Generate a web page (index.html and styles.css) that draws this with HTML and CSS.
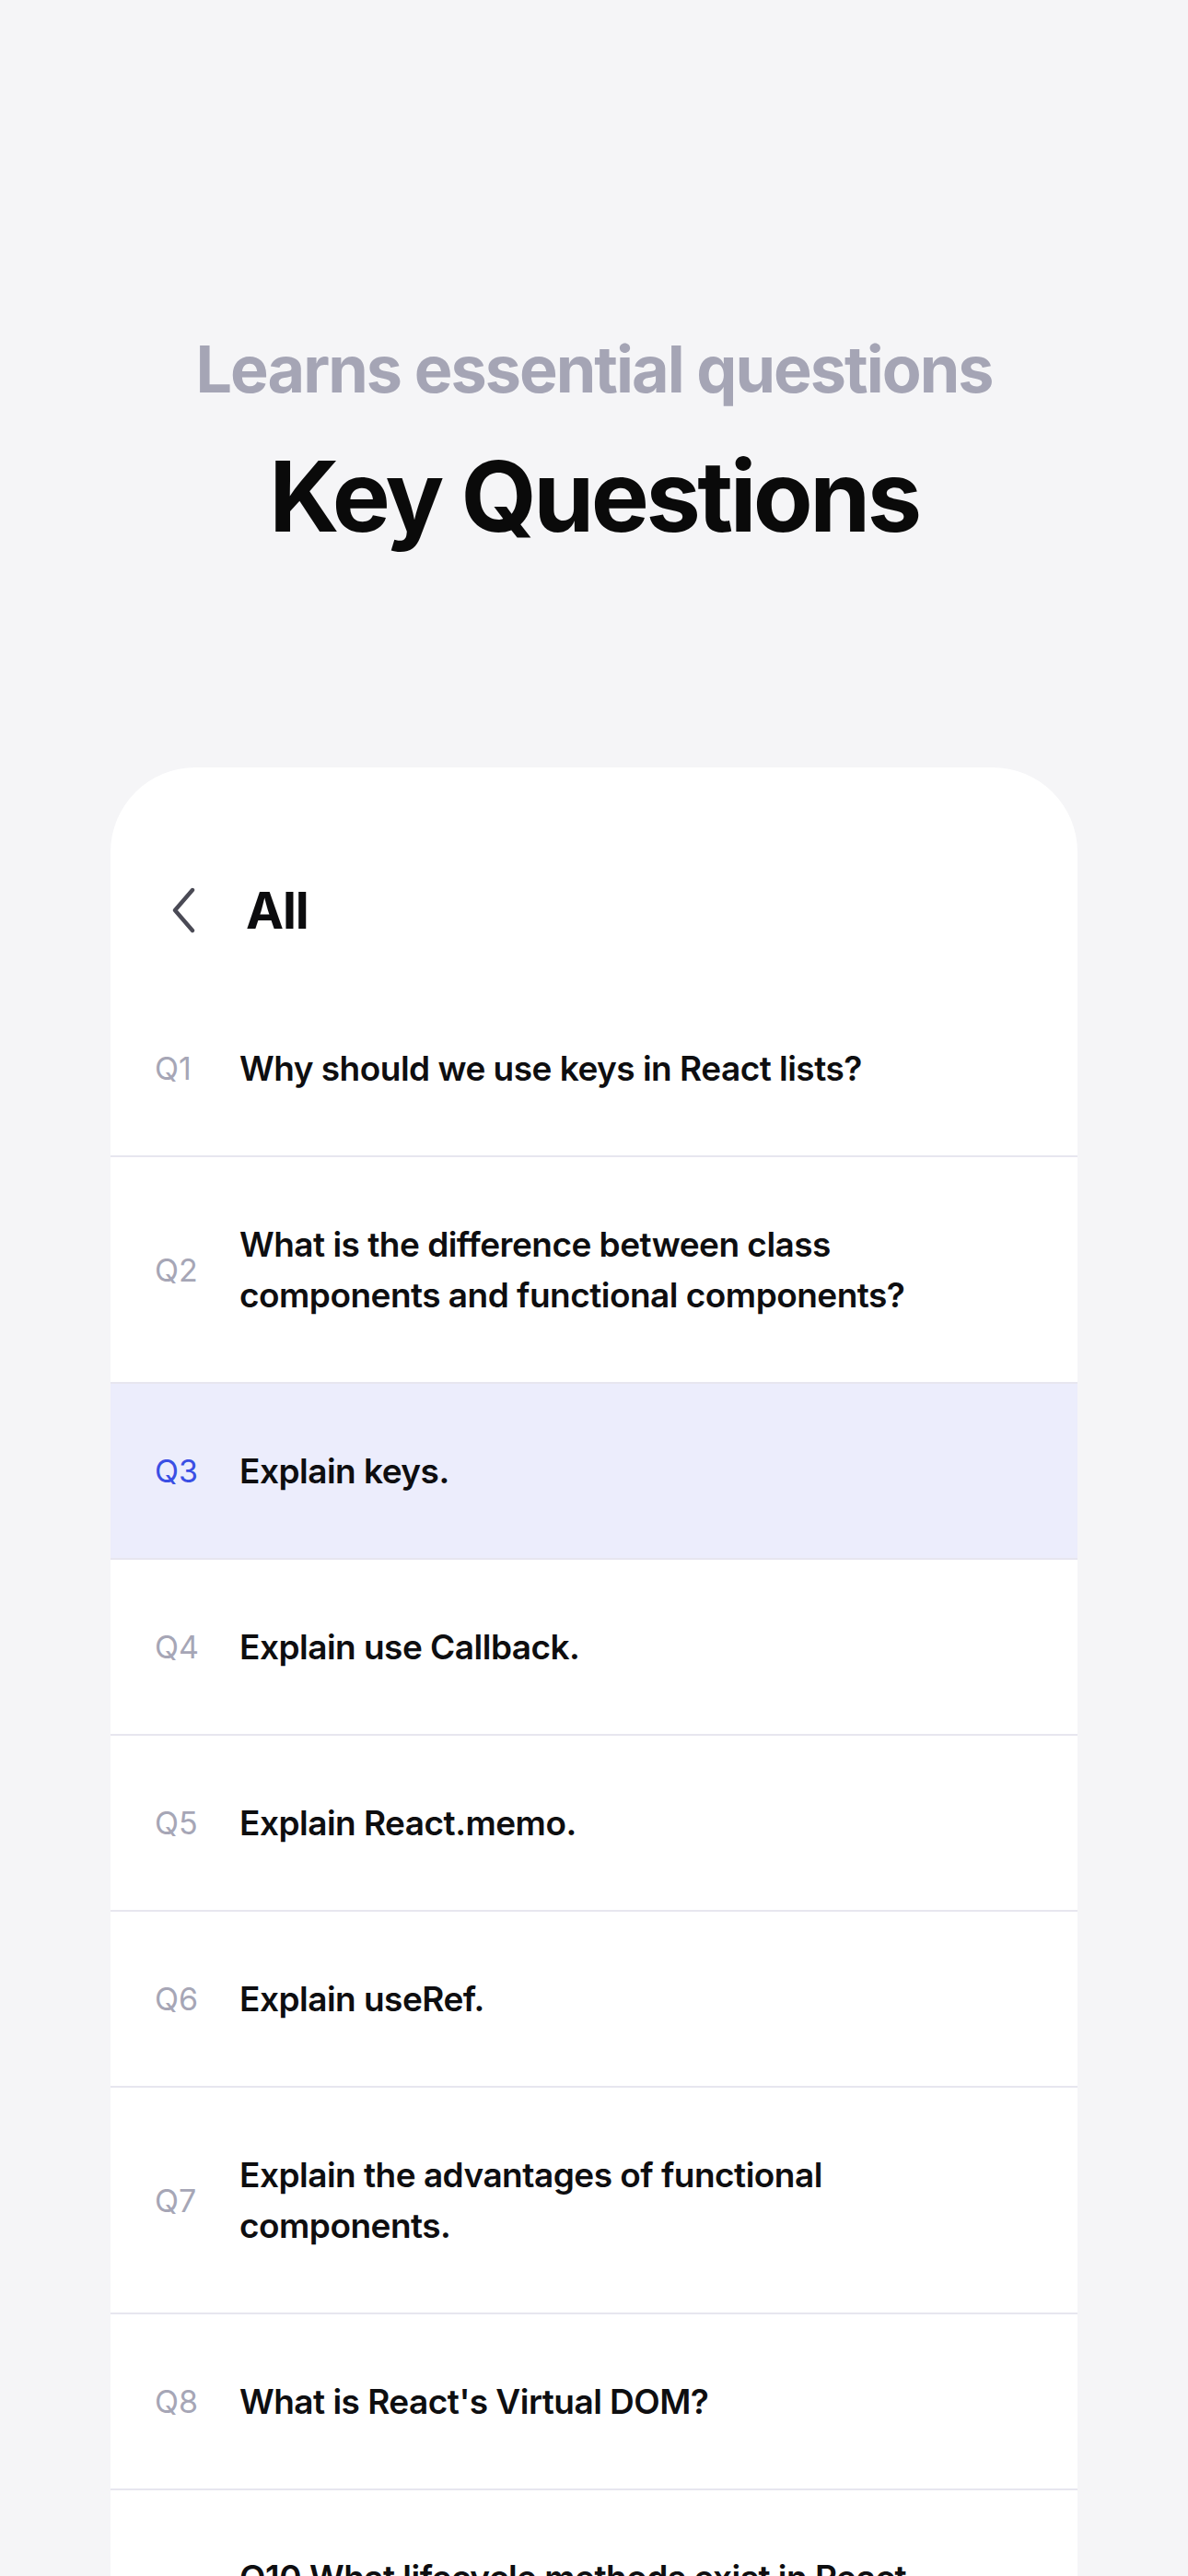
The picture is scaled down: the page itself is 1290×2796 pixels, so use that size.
FILE: index.html
```html
<!DOCTYPE html>
<html lang="en">
<head>
<meta charset="utf-8">
<title>Key Questions</title>
<link rel="stylesheet" href="styles.css">
</head>
<body>
<main class="page">
  <header class="hero">
    <p class="hero-sub">Learns essential questions</p>
    <h1 class="hero-title">Key Questions</h1>
  </header>
  <section class="card">
    <div class="card-head">
      <svg class="back" width="28" height="50" viewBox="0 0 28 50" aria-hidden="true">
        <path d="M24 3 L5 25 L24 47" fill="none" stroke="#4a4a55" stroke-width="4.4" stroke-linecap="round" stroke-linejoin="round"/>
      </svg>
      <h2 class="card-title">All</h2>
    </div>
    <ul class="qlist">
      <li class="q"><span class="q-num">Q1</span><span class="q-text">Why should we use keys in React lists?</span></li>
      <li class="q"><span class="q-num">Q2</span><span class="q-text">What is the difference between class components and functional components?</span></li>
      <li class="q q-active"><span class="q-num">Q3</span><span class="q-text">Explain keys.</span></li>
      <li class="q"><span class="q-num">Q4</span><span class="q-text">Explain use Callback.</span></li>
      <li class="q"><span class="q-num">Q5</span><span class="q-text">Explain React.memo.</span></li>
      <li class="q"><span class="q-num">Q6</span><span class="q-text">Explain useRef.</span></li>
      <li class="q"><span class="q-num">Q7</span><span class="q-text">Explain the advantages of functional components.</span></li>
      <li class="q"><span class="q-num">Q8</span><span class="q-text">What is React's Virtual DOM?</span></li>
      <li class="q"><span class="q-num"></span><span class="q-text">Q10 What lifecycle methods exist in React components?</span></li>
    </ul>
  </section>
</main>
</body>
</html>
```

FILE: styles.css
```css
* { box-sizing: border-box; }
html, body {
  margin: 0;
  padding: 0;
  background: #f5f5f7;
}
body {
  font-family: Inter, "Noto Sans", sans-serif;
  color: #111113;
  height: 2796px;
  overflow: hidden;
}
.page {
  padding-top: 359px;
}
.hero {
  text-align: center;
}
.hero-sub {
  margin: 0;
  font-size: 70px;
  line-height: 84px;
  font-weight: 700;
  letter-spacing: -0.028em;
  color: #a5a5b5;
}
.hero-title {
  margin: 32px 0 0;
  font-size: 106px;
  line-height: 127px;
  font-weight: 700;
  letter-spacing: -0.033em;
  color: #0a0a0a;
}
.card {
  margin: 231px 120px 0;
  background: #ffffff;
  border-radius: 92px 92px 0 0;
  padding-top: 100px;
}
.card-head {
  height: 110px;
  margin-bottom: 22px;
  display: flex;
  align-items: center;
  padding-left: 65px;
  gap: 54px;
}
.back {
  display: block;
}
.card-title {
  margin: 0;
  font-size: 55px;
  font-weight: 700;
  letter-spacing: -0.02em;
  color: #0c0c0e;
}
.qlist {
  list-style: none;
  margin: 0;
  padding: 0;
}
.q {
  display: flex;
  align-items: center;
  padding: 67px 80px 67px 48px;
  border-top: 2px solid #e7e6ef;
}
.q:first-child {
  border-top: 0;
}
.q-active {
  background: #ecedfc;
}
.q-num {
  flex: 0 0 92px;
  font-size: 34px;
  line-height: 55px;
  font-weight: 400;
  color: #a6a6b6;
}
.q-active .q-num {
  color: #3a4fe4;
}
.q-text {
  flex: 1;
  max-width: 800px;
  font-size: 37px;
  line-height: 55px;
  font-weight: 600;
  letter-spacing: -0.014em;
  color: #0e0e10;
}
```
